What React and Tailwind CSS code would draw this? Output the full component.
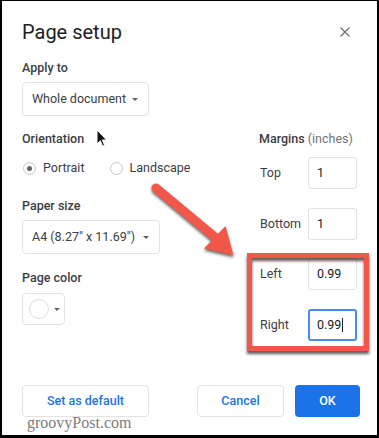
import React from "react";

function Caret({ className = "" }) {
  return (
    <span
      className={`inline-block w-0 h-0 border-l-[3px] border-r-[3px] border-t-[3px] border-l-transparent border-r-transparent border-t-[#5f6368] ${className}`}
    />
  );
}

function Radio({ checked, label }) {
  return (
    <label className="flex items-center gap-[7px]">
      <span className="w-[13px] h-[13px] rounded-full border border-[#c4c7cb] flex items-center justify-center">
        {checked && <span className="w-[5px] h-[5px] rounded-full bg-[#5f6368]" />}
      </span>
      <span>{label}</span>
    </label>
  );
}

function MarginRow({ label, value, focused, className = "" }) {
  return (
    <div className={`flex items-center h-[32px] ${className}`}>
      <span className="w-[49px] pl-px">{label}</span>
      <div
        className={
          focused
            ? "w-[49px] h-[32px] flex items-center pl-[7px] rounded-[3px] border-2 border-[#4a8af0] text-[#202124]"
            : "w-[49px] h-[32px] flex items-center pl-[8px] rounded-[3px] border border-[#e3e3e3] text-[#202124]"
        }
      >
        {value}
        {focused && <span className="ml-px w-px h-[14px] bg-[#202124]" />}
      </div>
    </div>
  );
}

export default function App() {
  return (
    <div className="relative w-[379px] h-[438px] bg-white border-black border-t border-l-2 border-r-2 border-b-[3px] font-['Roboto','Liberation_Sans',sans-serif] text-[12.5px] leading-[16px] text-[#3c4043]">
      {/* Header */}
      <div className="flex items-start justify-between pl-5 pr-[27px] pt-[17px]">
        <h1 className="text-[20px] leading-[28px] text-[#202124]">Page setup</h1>
        <svg width="10" height="10" viewBox="0 0 10 10" className="mt-[9px]">
          <path d="M0.5 0.5 L9.5 9.5 M9.5 0.5 L0.5 9.5" stroke="#6f7378" strokeWidth="1.3" />
        </svg>
      </div>

      {/* Apply to */}
      <div className="pl-5 mt-[14px]">
        <div className="font-medium">Apply to</div>
        <div className="mt-[6px] inline-flex items-center h-[34px] pl-[9px] pr-[10px] border border-[#e3e3e3] rounded-[4px] text-[#3c4043]">
          Whole document
          <Caret className="ml-[6px]" />
        </div>
      </div>

      {/* Columns */}
      <div className="flex pl-5 pr-5 mt-[15px]">
        <div className="flex-1">
          <div className="font-medium">Orientation</div>
          <div className="mt-[11px] h-[20px] flex items-center gap-[25px] pl-px">
            <Radio checked label="Portrait" />
            <Radio label="Landscape" />
          </div>

          <div className="mt-[20px] font-medium">Paper size</div>
          <div className="mt-[6px] inline-flex items-center h-[34px] pl-[9px] pr-[10px] border border-[#e3e3e3] rounded-[4px]">
            A4 (8.27" x 11.69")
            <Caret className="ml-[8px]" />
          </div>

          <div className="mt-[16px] font-medium">Page color</div>
          <div className="mt-[7px] flex items-center w-[43px] h-[32px] pl-[6px] border border-[#e3e3e3] rounded-[4px]">
            <span className="w-[20px] h-[20px] rounded-full border border-[#dadce0] bg-white" />
            <Caret className="ml-[5px]" />
          </div>
        </div>

        <div className="w-[98px]">
          <div className="whitespace-nowrap">
            <span className="font-medium">Margins</span>{" "}
            <span className="text-[#6f7378]">(inches)</span>
          </div>
          <MarginRow label="Top" value="1" className="mt-[10px]" />
          <MarginRow label="Bottom" value="1" className="mt-[19px]" />
          <MarginRow label="Left" value="0.99" className="mt-[18px]" />
          <MarginRow label="Right" value="0.99" focused className="mt-[19px]" />
        </div>
      </div>

      {/* Footer buttons */}
      <div className="flex justify-between pl-5 pr-[17px] mt-[44px]">
        <button className="w-[127px] h-[32px] rounded-[4px] border border-[#e3e3e3] text-[#1a73e8] font-medium">
          Set as default
        </button>
        <div className="flex gap-[11px]">
          <button className="w-[87px] h-[32px] rounded-[4px] border border-[#e3e3e3] text-[#1a73e8] font-medium">
            Cancel
          </button>
          <button className="w-[65px] h-[32px] rounded-[4px] bg-[#1a73e8] text-white font-medium">
            OK
          </button>
        </div>
      </div>

      {/* Watermark */}
      <div className="absolute left-[25px] top-[414px] font-['Liberation_Serif',serif] text-[16px] leading-[16px] text-[#7c7c7c]">
        groovyPost.com
      </div>

      {/* Mouse cursor */}
      <svg
        width="12"
        height="19"
        viewBox="0 0 12 19"
        className="absolute left-[94px] top-[128px]"
      >
        <path
          d="M1 1 L1 15 L4.3 11.8 L6.6 17.2 L8.6 16.3 L6.3 11 L10.6 11 Z"
          fill="#111"
          stroke="#fff"
          strokeWidth="1"
          strokeLinejoin="round"
        />
      </svg>

      {/* Red annotation arrow */}
      <svg
        width="100"
        height="90"
        viewBox="147 179 100 90"
        className="absolute left-[145px] top-[178px] drop-shadow-[0_2px_1.5px_rgba(0,0,0,0.6)]"
      >
        <line x1="156" y1="188" x2="216" y2="238" stroke="#f3574a" strokeWidth="9" strokeLinecap="round" />
        <polygon points="225.5,226 204,248.5 233.5,255.5" fill="#f3574a" />
      </svg>

      {/* Red highlight box */}
      <div className="absolute left-[245px] top-[252px] w-[122px] h-[98px] border-[5px] border-[#f3574a] drop-shadow-[0_3px_1.5px_rgba(0,0,0,0.65)]" />
    </div>
  );
}
